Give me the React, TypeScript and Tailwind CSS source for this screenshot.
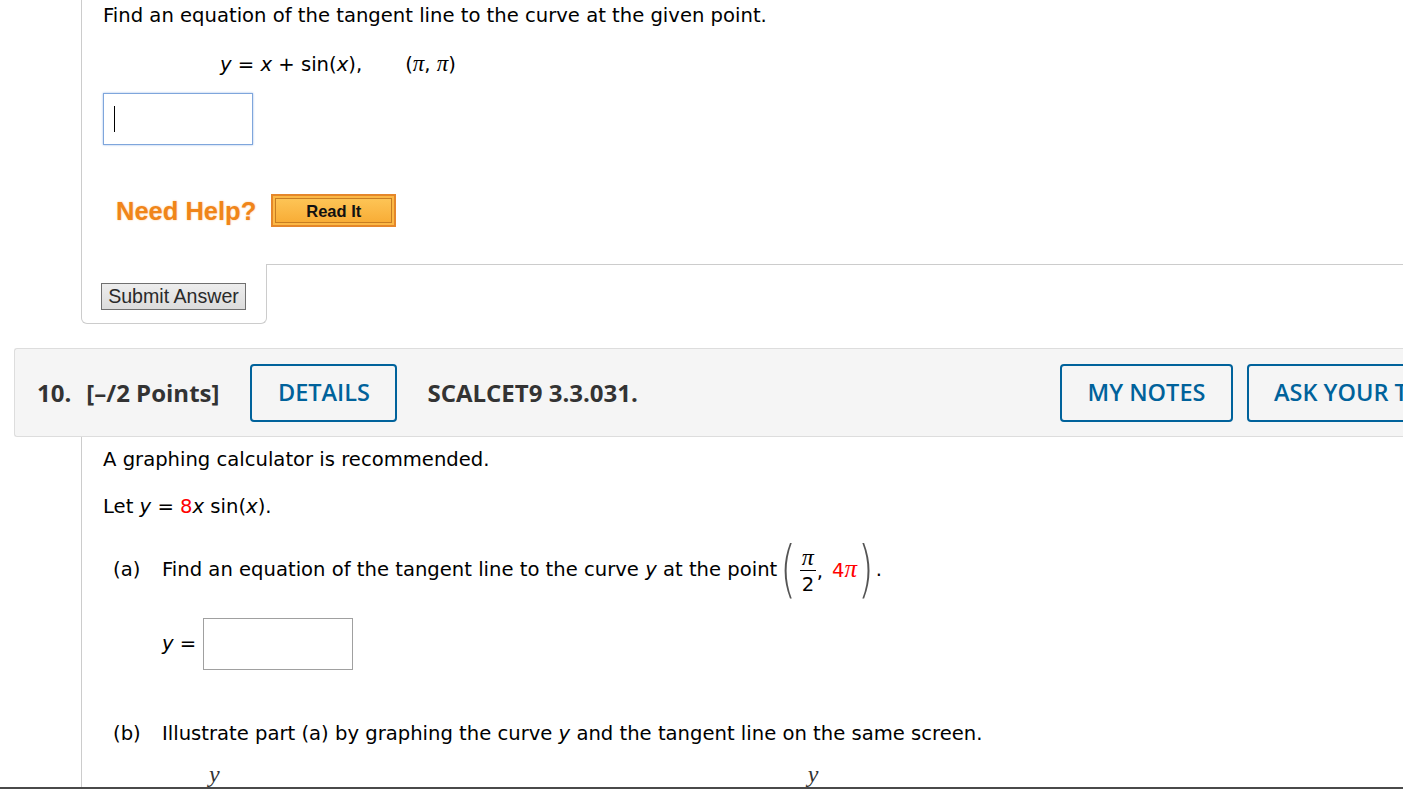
import React from "react";

const body = "font-['DejaVu_Sans','Verdana',sans-serif] text-[19.6px] leading-[24px] text-black";
const head = "font-['Open_Sans','Liberation_Sans',sans-serif]";

function Pi({ red, size = "text-[23px]" }: { red?: boolean; size?: string }) {
  return <span className={`font-['Liberation_Serif',serif] italic ${size} ${red ? "text-[#ff0000]" : ""}`}>π</span>;
}

function HeaderButton({ label, className }: { label: string; className?: string }) {
  return (
    <div
      className={`h-[58px] shrink-0 min-w-0 overflow-hidden flex items-center justify-center border-2 border-[#00629b] rounded-[4px] text-[#00629b] text-[23.5px] font-semibold whitespace-nowrap ${className ?? ""}`}
    >
      {label}
    </div>
  );
}

export default function App() {
  return (
    <div className="h-[789px] w-full overflow-hidden bg-white border-b-2 border-[#4a4a4a]">
      {/* previous question */}
      <div className={`ml-[81px] border-l border-[#cccccc] pl-[21px] pt-[4px] pb-[37px] ${body}`}>
        <p>Find an equation of the tangent line to the curve at the given point.</p>
        <div className="mt-[24px] ml-[117px] flex items-center whitespace-nowrap">
          <span>
            <i>y</i> = <i>x</i> + sin(<i>x</i>),
          </span>
          <span className="ml-[43px]">
            (<Pi />, <Pi />)
          </span>
        </div>
        <div className="mt-[16px] w-[150px] h-[52px] border border-[#7fa6dc] shadow-[0_0_2px_#9cbbe6] flex items-center pl-[10px]">
          <div className="w-px h-[26px] bg-black" />
        </div>
        <div className="mt-[49px] flex items-center">
          <span className="ml-[13px] font-['Liberation_Sans',Arial,sans-serif] font-bold text-[25.5px] text-[#f08519] [text-shadow:0_0_2px_#fbc58a]">
            Need Help?
          </span>
          <div className="ml-[15px] w-[125px] h-[33px] border-2 border-[#e5872a] bg-[#fbb846] p-[2px]">
            <div className="h-full border border-[#c77d22] bg-gradient-to-b from-[#fdc455] to-[#f8ad36] flex items-center justify-center font-['Liberation_Sans',Arial,sans-serif] font-bold text-[16.5px] text-[#111]">
              Read It
            </div>
          </div>
        </div>
      </div>
      <div className="flex">
        <div className="ml-[81px] w-[186px] border-l border-r border-b border-[#cccccc] rounded-b-[6px] pl-[19px] pt-[19px] pb-[13px]">
          <button className="h-[27px] w-[145px] border border-[#707070] bg-gradient-to-b from-[#ededed] to-[#dcdcdc] font-['Liberation_Sans',Arial,sans-serif] text-[19.6px] leading-none text-[#2a2a2a]">
            Submit Answer
          </button>
        </div>
        <div className="flex-1 border-t border-[#cccccc]" />
      </div>

      {/* question 10 header */}
      <div className={`mt-[24px] ml-[14px] h-[89px] border-t border-b border-l border-[#dddddd] rounded-l-[3px] bg-[#f5f5f5] flex items-center whitespace-nowrap ${head}`}>
        <span className="ml-[22px] text-[24px] font-bold text-[#333333]">10.</span>
        <span className="ml-[15px] text-[24px] font-bold text-[#333333]">[–/2 Points]</span>
        <HeaderButton label="DETAILS" className="ml-[31px] w-[147px]" />
        <span className="ml-[30px] text-[24px] font-bold text-[#333333]">SCALCET9 3.3.031.</span>
        <div className="flex-1" />
        <HeaderButton label="MY NOTES" className="w-[173px]" />
        <HeaderButton label="ASK YOUR TEACHER" className="ml-[14px] w-[260px] justify-start pl-[25px] -mr-[104px]" />
      </div>

      {/* question 10 body */}
      <div className={`ml-[81px] border-l border-[#cccccc] pl-[21px] pt-[11px] h-[400px] ${body}`}>
        <p>A graphing calculator is recommended.</p>
        <p className="mt-[23px]">
          Let <i>y</i> = <span className="text-[#ff0000]">8</span>
          <i>x</i> sin(<i>x</i>).
        </p>
        <div className="mt-[21px] h-[60px] flex items-center whitespace-nowrap">
          <span className="ml-[10px] w-[49px]">(a)</span>
          <span>
            Find an equation of the tangent line to the curve <i>y</i> at the point
          </span>
          <span className="ml-[3px] flex items-center">
            <span className="font-['DejaVu_Sans',sans-serif] font-light text-[#555] text-[40px] scale-y-[1.55] leading-none -mt-[4px]">(</span>
            <span className="ml-[4px] flex flex-col items-center leading-none">
              <Pi size="text-[24px]" />
              <span className="w-[16px] h-px bg-black mt-[1px] mb-[4px]" />
              <span className="text-[19.6px]">2</span>
            </span>
            <span className="ml-[1px] mt-[4px]">,</span>
            <span className="ml-[9px] text-[#ff0000]">
              4<Pi red size="text-[25px]" />
            </span>
            <span className="ml-[1px] font-['DejaVu_Sans',sans-serif] font-light text-[#555] text-[40px] scale-y-[1.55] leading-none -mt-[4px]">)</span>
          </span>
          <span className="ml-[2px]">.</span>
        </div>
        <div className="mt-[18px] flex items-center">
          <span className="ml-[59px] w-[41px]">
            <i>y</i> =
          </span>
          <div className="w-[150px] h-[52px] border border-[#a0a0a0]" />
        </div>
        <div className="mt-[52px] flex whitespace-nowrap">
          <span className="ml-[10px] w-[49px]">(b)</span>
          <span>
            Illustrate part (a) by graphing the curve <i>y</i> and the tangent line on the same screen.
          </span>
        </div>
        <div className="mt-[16px] flex font-['Liberation_Serif',serif] italic text-[24px] leading-[24px] text-[#333]">
          <span className="ml-[106px]">y</span>
          <span className="ml-[588px]">y</span>
        </div>
      </div>
    </div>
  );
}
